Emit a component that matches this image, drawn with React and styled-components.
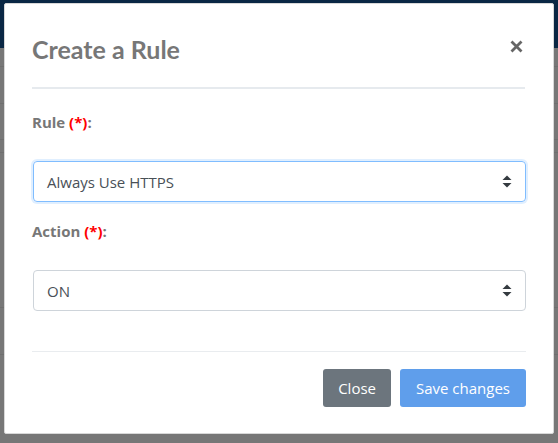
import React from 'react';
import styled, { createGlobalStyle } from 'styled-components';

const GlobalStyle = createGlobalStyle`
  html, body {
    margin: 0;
    padding: 0;
  }
  body {
    font-family: "Open Sans", "Liberation Sans", sans-serif;
    background: #777777;
    overflow: hidden;
  }
`;

const Page = styled.div`
  position: relative;
  width: 558px;
  height: 443px;
  background: #777777;
`;

const TopBar = styled.div`
  height: 48px;
  background: #0a2744;
`;

const BackdropLine = styled.div`
  height: 1px;
  margin-top: ${(p) => p.gap}px;
  background: #6f6f6f;
`;

const Modal = styled.div`
  position: absolute;
  top: 3px;
  left: 4px;
  width: 550px;
  height: 431px;
  box-sizing: border-box;
  background: #ffffff;
  border: 1px solid #d8d8d8;
  border-radius: 2px;
  display: flex;
  flex-direction: column;
`;

const Header = styled.div`
  margin: 0 28px 0 27px;
  padding: 30px 0 23px 0;
  border-bottom: 2px solid #e6eaee;
  display: flex;
  align-items: flex-start;
  justify-content: space-between;
`;

const Title = styled.h4`
  margin: 0;
  font-family: Lato, "Open Sans", sans-serif;
  font-size: 25px;
  line-height: 30px;
  font-weight: 700;
  color: #777777;
`;

const CloseX = styled.button`
  border: 0;
  background: none;
  padding: 0;
  margin: 5px 2px 0 0;
  width: 14px;
  height: 14px;
  display: flex;
  align-items: center;
  justify-content: center;
  cursor: pointer;
`;

const Body = styled.div`
  padding: 23px 27px 0 28px;
  display: flex;
  flex-direction: column;
  flex: 1;
`;

const Label = styled.label`
  display: block;
  font-size: 15px;
  line-height: 20px;
  font-weight: 700;
  color: #777777;
  margin-left: -1px;
  margin-bottom: 29px;
`;

const Req = styled.span`
  color: #ff0000;
`;

const SelectBox = styled.div`
  height: 41px;
  box-sizing: border-box;
  border: 1px solid ${(p) => (p.focused ? '#80bdff' : '#ced4da')};
  box-shadow: ${(p) => (p.focused ? '0 0 0 2px rgba(0, 123, 255, 0.12)' : 'none')};
  border-radius: 4px;
  padding: 0 13px 0 13px;
  display: flex;
  align-items: center;
  justify-content: space-between;
  font-size: 15px;
  color: #495057;
  margin-bottom: ${(p) => p.mb}px;
`;

const Footer = styled.div`
  margin: 0 27px 0 27px;
  padding: 17px 0 26px 0;
  border-top: 1px solid #e9ecef;
  display: flex;
  justify-content: flex-end;
  gap: 9px;
`;

const Button = styled.button`
  height: 38px;
  border: 0;
  border-radius: 3px;
  padding: 0 ${(p) => p.px}px;
  font-family: "Open Sans", "Liberation Sans", sans-serif;
  font-size: 15px;
  color: #ffffff;
  background: ${(p) => p.bg};
  cursor: pointer;
`;

const Arrows = () => (
  <svg width="10" height="13" viewBox="0 0 10 13">
    <path d="M5 0.5 L9.5 5 L0.5 5 Z" fill="#343a40" />
    <path d="M5 12.5 L9.5 8 L0.5 8 Z" fill="#343a40" />
  </svg>
);

const XIcon = () => (
  <svg width="13" height="13" viewBox="0 0 13 13">
    <path d="M1.5 1.5 L11.5 11.5 M11.5 1.5 L1.5 11.5" stroke="#666666" strokeWidth="2.8" strokeLinecap="butt" />
  </svg>
);

const Select = ({ value, focused, mb }) => (
  <SelectBox focused={focused} mb={mb}>
    <span>{value}</span>
    <Arrows />
  </SelectBox>
);

export default function App() {
  return (
    <>
      <GlobalStyle />
      <Page>
        <TopBar />
        <BackdropLine gap={18} />
        <BackdropLine gap={36} />
        <BackdropLine gap={35} />
        <BackdropLine gap={12} />
        <BackdropLine gap={154} />
        <BackdropLine gap={46} />
        <Modal>
          <Header>
            <Title>Create a Rule</Title>
            <CloseX aria-label="Close">
              <XIcon />
            </CloseX>
          </Header>
          <Body>
            <Label>
              Rule <Req>(*)</Req>:
            </Label>
            <Select value="Always Use HTTPS" focused mb={19} />
            <Label>
              Action <Req>(*)</Req>:
            </Label>
            <Select value="ON" mb={39} />
          </Body>
          <Footer>
            <Button bg="#6c757d" px={15}>Close</Button>
            <Button bg="#5f9eeb" px={16}>Save changes</Button>
          </Footer>
        </Modal>
      </Page>
    </>
  );
}
